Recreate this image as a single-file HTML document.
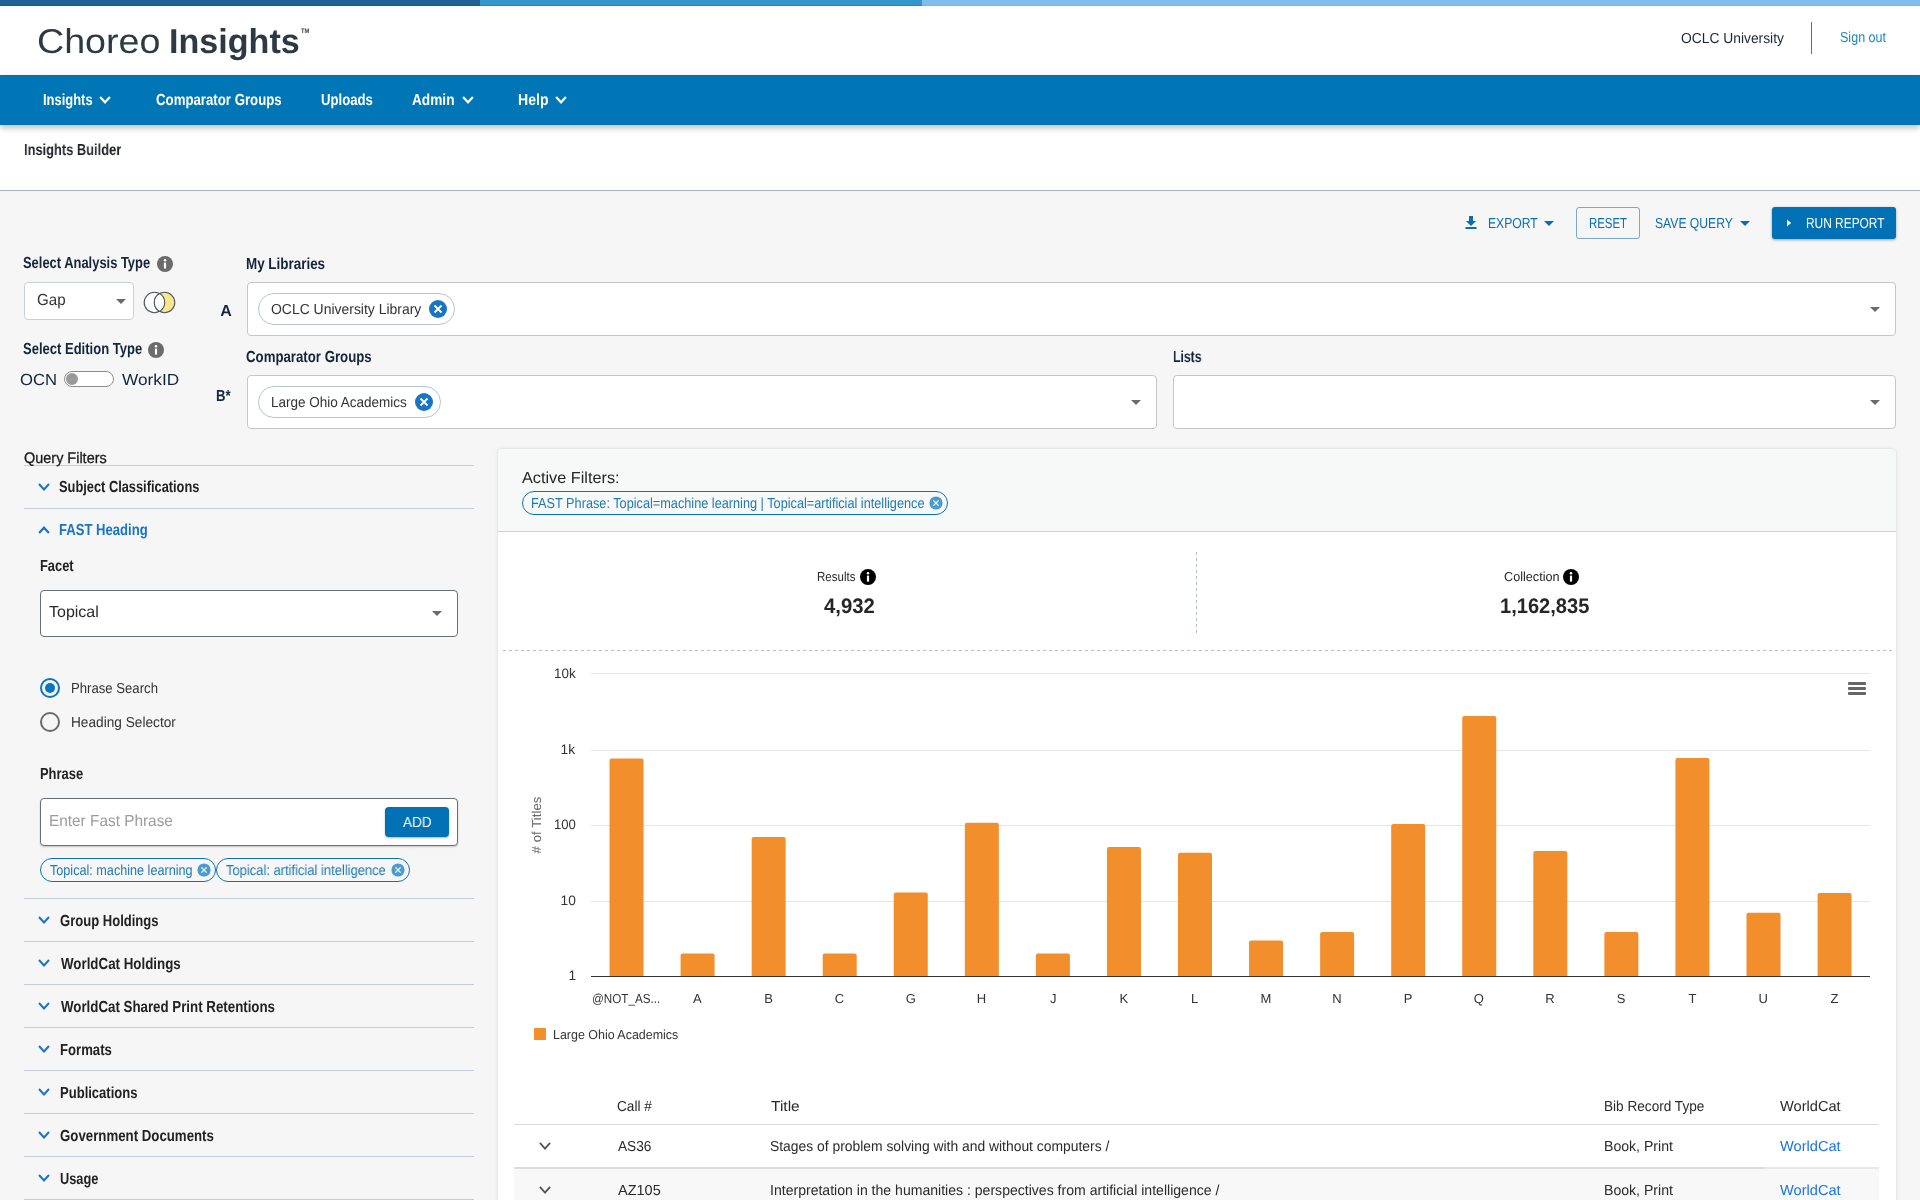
<!DOCTYPE html>
<html><head><meta charset="utf-8"><title>Choreo Insights</title>
<style>
html,body{margin:0;padding:0}
body{width:1920px;height:1200px;overflow:hidden;position:relative;background:#f6f6f6;font-family:"Liberation Sans",sans-serif;text-rendering:geometricPrecision;will-change:transform}
</style></head><body>
<div style="position:absolute;left:0;top:0;width:480px;height:6px;background:#236192;border-bottom:1px solid #1d5586;box-sizing:border-box"></div>
<div style="position:absolute;left:480px;top:0;width:442px;height:6px;background:#3397c9;border-bottom:1px solid #238bc2;box-sizing:border-box"></div>
<div style="position:absolute;left:922px;top:0;width:998px;height:6px;background:#80bdeb;border-bottom:1px solid #74b4e6;box-sizing:border-box"></div>
<div style="position:absolute;left:0;top:6px;width:1920px;height:69px;background:#fff"></div>
<div style="position:absolute;left:1811px;top:22px;width:1px;height:32px;background:#6b6b6b"></div>
<div style="position:absolute;left:0;top:125px;width:1920px;height:65px;background:#fff"></div>
<div style="position:absolute;left:0;top:190px;width:1920px;height:1px;background:#a9b3bf"></div>
<div style="position:absolute;left:0;top:75px;width:1920px;height:50px;background:#0076b6;box-shadow:0 3px 6px rgba(0,0,0,.25)"></div>
<svg style="position:absolute;left:99px;top:96px" width="12" height="8" viewBox="0 0 12 8"><polyline points="1.1,1.1 6.0,6.35 10.9,1.1" fill="none" stroke="#fff" stroke-width="2.2" stroke-linecap="butt" stroke-linejoin="miter"/></svg>
<svg style="position:absolute;left:462px;top:96px" width="12" height="8" viewBox="0 0 12 8"><polyline points="1.1,1.1 6.0,6.35 10.9,1.1" fill="none" stroke="#fff" stroke-width="2.2" stroke-linecap="butt" stroke-linejoin="miter"/></svg>
<svg style="position:absolute;left:555px;top:96px" width="12" height="8" viewBox="0 0 12 8"><polyline points="1.1,1.1 6.0,6.35 10.9,1.1" fill="none" stroke="#fff" stroke-width="2.2" stroke-linecap="butt" stroke-linejoin="miter"/></svg>
<svg style="position:absolute;left:1465px;top:216px" width="12" height="13" viewBox="0 0 12 13"><path d="M4 0h4v5h3l-5 5-5-5h3z" fill="#0a6fb2"/><rect x="0.5" y="11" width="11" height="2" fill="#0a6fb2"/></svg>
<svg style="position:absolute;left:1544px;top:221px" width="10" height="5" viewBox="0 0 10 5"><polygon points="0,0 10,0 5.0,5" fill="#0a6fb2"/></svg>
<div style="position:absolute;left:1576px;top:207px;width:64px;height:32px;border:1px solid #79a9d1;border-radius:3px;box-sizing:border-box"></div>
<svg style="position:absolute;left:1740px;top:221px" width="10" height="5" viewBox="0 0 10 5"><polygon points="0,0 10,0 5.0,5" fill="#0a6fb2"/></svg>
<div style="position:absolute;left:1772px;top:207px;width:124px;height:32px;background:#0071b4;border-radius:3px;box-shadow:0 1px 3px rgba(0,0,0,.35)"></div>
<svg style="position:absolute;left:1787px;top:219px" width="5" height="8" viewBox="0 0 5 8"><polygon points="0,0.5 4.2,4 0,7.5" fill="#fff"/></svg>
<svg style="position:absolute;left:157px;top:256px" width="16" height="16" viewBox="0 0 16 16"><circle cx="8" cy="8" r="8" fill="#6b6b6b"/><rect x="6.9" y="6.6" width="2.2" height="6" fill="#fff"/><circle cx="8" cy="4.3" r="1.25" fill="#fff"/></svg>
<div style="position:absolute;left:24px;top:282px;width:110px;height:38px;background:#fff;border:1px solid #c9d0d8;border-radius:4px;box-sizing:border-box"></div>
<svg style="position:absolute;left:116px;top:299px" width="10" height="5" viewBox="0 0 10 5"><polygon points="0,0 10,0 5.0,5" fill="#6b6b6b"/></svg>
<svg style="position:absolute;left:143px;top:291px" width="33" height="23" viewBox="0 0 33 23"><circle cx="11.4" cy="11.5" r="10.2" fill="#fff" stroke="#4a5566" stroke-width="1.1"/><circle cx="21.6" cy="11.5" r="10.2" fill="#fde68a" stroke="#4a5566" stroke-width="1.1"/><path d="M16.5 2.6 A10.2 10.2 0 0 1 16.5 20.4 A10.2 10.2 0 0 1 16.5 2.6Z" fill="#fff" stroke="#4a5566" stroke-width="1.1"/></svg>
<svg style="position:absolute;left:148px;top:342px" width="16" height="16" viewBox="0 0 16 16"><circle cx="8" cy="8" r="8" fill="#6b6b6b"/><rect x="6.9" y="6.6" width="2.2" height="6" fill="#fff"/><circle cx="8" cy="4.3" r="1.25" fill="#fff"/></svg>
<div style="position:absolute;left:64px;top:371px;width:50px;height:16px;background:#fff;border:1px solid #8c8c8c;border-radius:8px;box-sizing:border-box"></div>
<div style="position:absolute;left:66px;top:373px;width:12px;height:12px;background:#9a9a9a;border-radius:50%"></div>
<div style="position:absolute;left:247px;top:282px;width:1649px;height:54px;background:#fff;border:1px solid #c6c6c6;border-radius:4px;box-sizing:border-box"></div>
<div style="position:absolute;left:258px;top:293px;width:197px;height:32px;border:1px solid #b8c4d1;border-radius:16px;box-sizing:border-box"></div>
<svg style="position:absolute;left:429px;top:300px" width="18" height="18" viewBox="0 0 18 18"><circle cx="9" cy="9" r="9" fill="#1a74c4"/><path d="M5.5 5.5 L12.5 12.5 M12.5 5.5 L5.5 12.5" stroke="#fff" stroke-width="1.8"/></svg>
<svg style="position:absolute;left:1870px;top:307px" width="10" height="5" viewBox="0 0 10 5"><polygon points="0,0 10,0 5.0,5" fill="#6b6b6b"/></svg>
<div style="position:absolute;left:247px;top:375px;width:910px;height:54px;background:#fff;border:1px solid #c6c6c6;border-radius:4px;box-sizing:border-box"></div>
<div style="position:absolute;left:258px;top:386px;width:183px;height:32px;border:1px solid #b8c4d1;border-radius:16px;box-sizing:border-box"></div>
<svg style="position:absolute;left:415px;top:393px" width="18" height="18" viewBox="0 0 18 18"><circle cx="9" cy="9" r="9" fill="#1a74c4"/><path d="M5.5 5.5 L12.5 12.5 M12.5 5.5 L5.5 12.5" stroke="#fff" stroke-width="1.8"/></svg>
<svg style="position:absolute;left:1131px;top:400px" width="10" height="5" viewBox="0 0 10 5"><polygon points="0,0 10,0 5.0,5" fill="#6b6b6b"/></svg>
<div style="position:absolute;left:1173px;top:375px;width:723px;height:54px;background:#fff;border:1px solid #c6c6c6;border-radius:4px;box-sizing:border-box"></div>
<svg style="position:absolute;left:1870px;top:400px" width="10" height="5" viewBox="0 0 10 5"><polygon points="0,0 10,0 5.0,5" fill="#6b6b6b"/></svg>
<div style="position:absolute;left:24px;top:465px;width:450px;height:1px;background:#c5ccd5"></div>
<svg style="position:absolute;left:38px;top:483px" width="12" height="8" viewBox="0 0 12 8"><polyline points="1.0,1.0 6.0,6.5 11.0,1.0" fill="none" stroke="#1a74c4" stroke-width="2" stroke-linecap="butt" stroke-linejoin="miter"/></svg>
<div style="position:absolute;left:24px;top:508px;width:450px;height:1px;background:#c5ccd5"></div>
<svg style="position:absolute;left:38px;top:526px" width="12" height="8" viewBox="0 0 12 8"><polyline points="1.1,6.9 6.0,1.6500000000000001 10.9,6.9" fill="none" stroke="#1a74c4" stroke-width="2.2"/></svg>
<div style="position:absolute;left:40px;top:590px;width:418px;height:47px;background:#fff;border:1px solid #676f7a;border-radius:4px;box-sizing:border-box"></div>
<svg style="position:absolute;left:432px;top:611px" width="10" height="5" viewBox="0 0 10 5"><polygon points="0,0 10,0 5.0,5" fill="#6b6b6b"/></svg>
<svg style="position:absolute;left:40px;top:678px" width="20" height="20" viewBox="0 0 20 20"><circle cx="10" cy="10" r="9" fill="none" stroke="#0a76c0" stroke-width="2"/><circle cx="10" cy="10" r="5" fill="#0a76c0"/></svg>
<svg style="position:absolute;left:40px;top:712px" width="20" height="20" viewBox="0 0 20 20"><circle cx="10" cy="10" r="9" fill="none" stroke="#6b6b6b" stroke-width="2"/></svg>
<div style="position:absolute;left:40px;top:798px;width:418px;height:48px;background:#fff;border:1px solid #676f7a;border-radius:4px;box-sizing:border-box;box-shadow:0 1px 2px rgba(0,0,0,.2)"></div>
<div style="position:absolute;left:385px;top:807px;width:64px;height:30px;background:#0071b4;border-radius:4px;box-shadow:0 1px 2px rgba(0,0,0,.3)"></div>
<div style="position:absolute;left:40px;top:858px;width:176px;height:24px;border:1px solid #0b72b4;border-radius:12px;box-sizing:border-box"></div>
<svg style="position:absolute;left:197px;top:863px" width="14" height="14" viewBox="0 0 14 14"><circle cx="7" cy="7" r="6.6" fill="#4a9bd0"/><path d="M4.4 4.4 L9.6 9.6 M9.6 4.4 L4.4 9.6" stroke="#fff" stroke-width="1.3"/></svg>
<div style="position:absolute;left:216px;top:858px;width:194px;height:24px;border:1px solid #0b72b4;border-radius:12px;box-sizing:border-box"></div>
<svg style="position:absolute;left:391px;top:863px" width="14" height="14" viewBox="0 0 14 14"><circle cx="7" cy="7" r="6.6" fill="#4a9bd0"/><path d="M4.4 4.4 L9.6 9.6 M9.6 4.4 L4.4 9.6" stroke="#fff" stroke-width="1.3"/></svg>
<div style="position:absolute;left:24px;top:898px;width:450px;height:1px;background:#c5ccd5"></div>
<svg style="position:absolute;left:38px;top:916px" width="12" height="8" viewBox="0 0 12 8"><polyline points="1.0,1.0 6.0,6.5 11.0,1.0" fill="none" stroke="#1a74c4" stroke-width="2" stroke-linecap="butt" stroke-linejoin="miter"/></svg>
<div style="position:absolute;left:24px;top:941px;width:450px;height:1px;background:#c5ccd5"></div>
<svg style="position:absolute;left:38px;top:959px" width="12" height="8" viewBox="0 0 12 8"><polyline points="1.0,1.0 6.0,6.5 11.0,1.0" fill="none" stroke="#1a74c4" stroke-width="2" stroke-linecap="butt" stroke-linejoin="miter"/></svg>
<div style="position:absolute;left:24px;top:984px;width:450px;height:1px;background:#c5ccd5"></div>
<svg style="position:absolute;left:38px;top:1002px" width="12" height="8" viewBox="0 0 12 8"><polyline points="1.0,1.0 6.0,6.5 11.0,1.0" fill="none" stroke="#1a74c4" stroke-width="2" stroke-linecap="butt" stroke-linejoin="miter"/></svg>
<div style="position:absolute;left:24px;top:1027px;width:450px;height:1px;background:#c5ccd5"></div>
<svg style="position:absolute;left:38px;top:1045px" width="12" height="8" viewBox="0 0 12 8"><polyline points="1.0,1.0 6.0,6.5 11.0,1.0" fill="none" stroke="#1a74c4" stroke-width="2" stroke-linecap="butt" stroke-linejoin="miter"/></svg>
<div style="position:absolute;left:24px;top:1070px;width:450px;height:1px;background:#c5ccd5"></div>
<svg style="position:absolute;left:38px;top:1088px" width="12" height="8" viewBox="0 0 12 8"><polyline points="1.0,1.0 6.0,6.5 11.0,1.0" fill="none" stroke="#1a74c4" stroke-width="2" stroke-linecap="butt" stroke-linejoin="miter"/></svg>
<div style="position:absolute;left:24px;top:1113px;width:450px;height:1px;background:#c5ccd5"></div>
<svg style="position:absolute;left:38px;top:1131px" width="12" height="8" viewBox="0 0 12 8"><polyline points="1.0,1.0 6.0,6.5 11.0,1.0" fill="none" stroke="#1a74c4" stroke-width="2" stroke-linecap="butt" stroke-linejoin="miter"/></svg>
<div style="position:absolute;left:24px;top:1156px;width:450px;height:1px;background:#c5ccd5"></div>
<svg style="position:absolute;left:38px;top:1174px" width="12" height="8" viewBox="0 0 12 8"><polyline points="1.0,1.0 6.0,6.5 11.0,1.0" fill="none" stroke="#1a74c4" stroke-width="2" stroke-linecap="butt" stroke-linejoin="miter"/></svg>
<div style="position:absolute;left:24px;top:1199px;width:450px;height:1px;background:#c5ccd5"></div>
<div style="position:absolute;left:498px;top:449px;width:1398px;height:800px;background:#fff;border-radius:4px;box-shadow:0 0 1px rgba(0,0,0,.22),0 0 4px rgba(0,0,0,.1)"></div>
<div style="position:absolute;left:498px;top:449px;width:1398px;height:83px;background:#f7f8f8;border-radius:4px 4px 0 0;border-bottom:1px solid #cfd1d2;box-sizing:border-box"></div>
<div style="position:absolute;left:522px;top:491px;width:426px;height:24px;border:1px solid #0b72b4;border-radius:12px;box-sizing:border-box"></div>
<svg style="position:absolute;left:929px;top:496px" width="14" height="14" viewBox="0 0 14 14"><circle cx="7" cy="7" r="6.6" fill="#4a9bd0"/><path d="M4.4 4.4 L9.6 9.6 M9.6 4.4 L4.4 9.6" stroke="#fff" stroke-width="1.3"/></svg>
<svg style="position:absolute;left:860px;top:569px" width="16" height="16" viewBox="0 0 16 16"><circle cx="8" cy="8" r="8" fill="#000"/><rect x="6.9" y="6.6" width="2.2" height="6" fill="#fff"/><circle cx="8" cy="4.2" r="1.25" fill="#fff"/></svg>
<div style="position:absolute;left:1196px;top:552px;width:1px;height:82px;background:repeating-linear-gradient(to bottom,#b3bcc6 0 3px,transparent 3px 6px)"></div>
<svg style="position:absolute;left:1563px;top:569px" width="16" height="16" viewBox="0 0 16 16"><circle cx="8" cy="8" r="8" fill="#000"/><rect x="6.9" y="6.6" width="2.2" height="6" fill="#fff"/><circle cx="8" cy="4.2" r="1.25" fill="#fff"/></svg>
<div style="position:absolute;left:503px;top:650px;width:1389px;height:1px;background:repeating-linear-gradient(to right,#b3bcc6 0 3px,transparent 3px 6px)"></div>
<div style="position:absolute;left:591px;top:673px;width:1279px;height:1px;background:#e6e6e6"></div>
<div style="position:absolute;left:591px;top:750px;width:1279px;height:1px;background:#e6e6e6"></div>
<div style="position:absolute;left:591px;top:825px;width:1279px;height:1px;background:#e6e6e6"></div>
<div style="position:absolute;left:591px;top:901px;width:1279px;height:1px;background:#e6e6e6"></div>
<div style="position:absolute;left:591px;top:976px;width:1279px;height:1px;background:#333"></div>
<svg style="position:absolute;left:591px;top:650px" width="1279" height="326" viewBox="0 0 1279 326"><path d="M18.53 326 V110.60 Q18.53 108.60 20.53 108.60 H50.53 Q52.53 108.60 52.53 110.60 V326Z" fill="#f28e2b"/><path d="M89.59 326 V305.50 Q89.59 303.50 91.59 303.50 H121.59 Q123.59 303.50 123.59 305.50 V326Z" fill="#f28e2b"/><path d="M160.65 326 V189.00 Q160.65 187.00 162.65 187.00 H192.65 Q194.65 187.00 194.65 189.00 V326Z" fill="#f28e2b"/><path d="M231.71 326 V305.50 Q231.71 303.50 233.71 303.50 H263.71 Q265.71 303.50 265.71 305.50 V326Z" fill="#f28e2b"/><path d="M302.77 326 V244.40 Q302.77 242.40 304.77 242.40 H334.77 Q336.77 242.40 336.77 244.40 V326Z" fill="#f28e2b"/><path d="M373.83 326 V174.80 Q373.83 172.80 375.83 172.80 H405.83 Q407.83 172.80 407.83 174.80 V326Z" fill="#f28e2b"/><path d="M444.89 326 V305.50 Q444.89 303.50 446.89 303.50 H476.89 Q478.89 303.50 478.89 305.50 V326Z" fill="#f28e2b"/><path d="M515.95 326 V198.90 Q515.95 196.90 517.95 196.90 H547.95 Q549.95 196.90 549.95 198.90 V326Z" fill="#f28e2b"/><path d="M587.01 326 V204.70 Q587.01 202.70 589.01 202.70 H619.01 Q621.01 202.70 621.01 204.70 V326Z" fill="#f28e2b"/><path d="M658.07 326 V292.60 Q658.07 290.60 660.07 290.60 H690.07 Q692.07 290.60 692.07 292.60 V326Z" fill="#f28e2b"/><path d="M729.13 326 V284.00 Q729.13 282.00 731.13 282.00 H761.13 Q763.13 282.00 763.13 284.00 V326Z" fill="#f28e2b"/><path d="M800.19 326 V176.00 Q800.19 174.00 802.19 174.00 H832.19 Q834.19 174.00 834.19 176.00 V326Z" fill="#f28e2b"/><path d="M871.25 326 V68.00 Q871.25 66.00 873.25 66.00 H903.25 Q905.25 66.00 905.25 68.00 V326Z" fill="#f28e2b"/><path d="M942.31 326 V203.00 Q942.31 201.00 944.31 201.00 H974.31 Q976.31 201.00 976.31 203.00 V326Z" fill="#f28e2b"/><path d="M1013.37 326 V284.00 Q1013.37 282.00 1015.37 282.00 H1045.37 Q1047.37 282.00 1047.37 284.00 V326Z" fill="#f28e2b"/><path d="M1084.43 326 V110.00 Q1084.43 108.00 1086.43 108.00 H1116.43 Q1118.43 108.00 1118.43 110.00 V326Z" fill="#f28e2b"/><path d="M1155.49 326 V264.80 Q1155.49 262.80 1157.49 262.80 H1187.49 Q1189.49 262.80 1189.49 264.80 V326Z" fill="#f28e2b"/><path d="M1226.55 326 V245.00 Q1226.55 243.00 1228.55 243.00 H1258.55 Q1260.55 243.00 1260.55 245.00 V326Z" fill="#f28e2b"/></svg>
<div style="position:absolute;left:1848px;top:682px;width:18px;height:3px;background:#666;border-radius:1px"></div>
<div style="position:absolute;left:1848px;top:687px;width:18px;height:3px;background:#666;border-radius:1px"></div>
<div style="position:absolute;left:1848px;top:692px;width:18px;height:3px;background:#666;border-radius:1px"></div>
<div style="position:absolute;left:534px;top:1028px;width:12px;height:12px;background:#f28e2b"></div>
<div style="position:absolute;left:514px;top:1124px;width:1365px;height:1px;background:#dcdcdc"></div>
<svg style="position:absolute;left:539px;top:1142px" width="12" height="8" viewBox="0 0 12 8"><polyline points="0.9,0.9 6.0,6.65 11.1,0.9" fill="none" stroke="#555" stroke-width="1.8" stroke-linecap="butt" stroke-linejoin="miter"/></svg>
<div style="position:absolute;left:514px;top:1167px;width:1250px;height:2px;background:#dcdcdc"></div>
<div style="position:absolute;left:1764px;top:1167px;width:115px;height:2px;background:#e8e8e8"></div>
<div style="position:absolute;left:514px;top:1169px;width:1365px;height:40px;background:#f8f8f8"></div>
<svg style="position:absolute;left:539px;top:1186px" width="12" height="8" viewBox="0 0 12 8"><polyline points="0.9,0.9 6.0,6.65 11.1,0.9" fill="none" stroke="#555" stroke-width="1.8" stroke-linecap="butt" stroke-linejoin="miter"/></svg>
<div style="position:absolute;left:36.82px;top:20px;font-size:34.5px;line-height:44px;font-weight:300;color:#2d3a44;white-space:pre;transform:scaleX(1.0909);transform-origin:0 0;font-weight:normal;">Choreo</div>
<div style="position:absolute;left:168.52px;top:20px;font-size:34.5px;line-height:44px;font-weight:700;color:#2d3a44;white-space:pre;transform:scaleX(0.9884);transform-origin:0 0;">Insights</div>
<div style="position:absolute;left:301.00px;top:27px;font-size:6.5px;line-height:9px;font-weight:700;color:#2d3a44;white-space:pre;transform:scaleX(0.8889);transform-origin:0 0;">TM</div>
<div style="position:absolute;left:1681.05px;top:30px;font-size:14.5px;line-height:19px;font-weight:400;color:#1c2636;white-space:pre;transform:scaleX(0.9533);transform-origin:0 0;">OCLC University</div>
<div style="position:absolute;left:1840.13px;top:29px;font-size:14.5px;line-height:19px;font-weight:400;color:#1d87c4;white-space:pre;transform:scaleX(0.8654);transform-origin:0 0;">Sign out</div>
<div style="position:absolute;left:43.19px;top:91px;font-size:16.0px;line-height:20px;font-weight:700;color:#fff;white-space:pre;transform:scaleX(0.8083);transform-origin:0 0;">Insights</div>
<div style="position:absolute;left:156.17px;top:91px;font-size:16.0px;line-height:20px;font-weight:700;color:#fff;white-space:pre;transform:scaleX(0.8267);transform-origin:0 0;">Comparator Groups</div>
<div style="position:absolute;left:321.18px;top:91px;font-size:16.0px;line-height:20px;font-weight:700;color:#fff;white-space:pre;transform:scaleX(0.8226);transform-origin:0 0;">Uploads</div>
<div style="position:absolute;left:412.15px;top:91px;font-size:16.0px;line-height:20px;font-weight:700;color:#fff;white-space:pre;transform:scaleX(0.8542);transform-origin:0 0;">Admin</div>
<div style="position:absolute;left:518.12px;top:91px;font-size:16.0px;line-height:20px;font-weight:700;color:#fff;white-space:pre;transform:scaleX(0.8788);transform-origin:0 0;">Help</div>
<div style="position:absolute;left:23.70px;top:141px;font-size:16.0px;line-height:20px;font-weight:700;color:#1f2328;white-space:pre;transform:scaleX(0.8042);transform-origin:0 0;">Insights Builder</div>
<div style="position:absolute;left:1487.56px;top:215px;font-size:14.5px;line-height:19px;font-weight:400;color:#0a6fb2;white-space:pre;transform:scaleX(0.8379);transform-origin:0 0;">EXPORT</div>
<div style="position:absolute;left:1589.21px;top:215px;font-size:14.5px;line-height:19px;font-weight:400;color:#0a6fb2;white-space:pre;transform:scaleX(0.7872);transform-origin:0 0;">RESET</div>
<div style="position:absolute;left:1655.16px;top:215px;font-size:14.5px;line-height:19px;font-weight:400;color:#0a6fb2;white-space:pre;transform:scaleX(0.8370);transform-origin:0 0;">SAVE QUERY</div>
<div style="position:absolute;left:1806.18px;top:215px;font-size:14.5px;line-height:19px;font-weight:400;color:#fff;white-space:pre;transform:scaleX(0.8211);transform-origin:0 0;">RUN REPORT</div>
<div style="position:absolute;left:23.19px;top:254px;font-size:16.0px;line-height:20px;font-weight:700;color:#14253b;white-space:pre;transform:scaleX(0.8077);transform-origin:0 0;">Select Analysis Type</div>
<div style="position:absolute;left:36.66px;top:291px;font-size:16.0px;line-height:20px;font-weight:400;color:#333;white-space:pre;transform:scaleX(0.9448);transform-origin:0 0;">Gap</div>
<div style="position:absolute;left:23.19px;top:340px;font-size:16.0px;line-height:20px;font-weight:700;color:#14253b;white-space:pre;transform:scaleX(0.8138);transform-origin:0 0;">Select Edition Type</div>
<div style="position:absolute;left:19.56px;top:371px;font-size:16.0px;line-height:20px;font-weight:400;color:#14253b;white-space:pre;transform:scaleX(1.0424);transform-origin:0 0;">OCN</div>
<div style="position:absolute;left:122.00px;top:371px;font-size:16.0px;line-height:20px;font-weight:400;color:#14253b;white-space:pre;transform:scaleX(1.0769);transform-origin:0 0;">WorkID</div>
<div style="position:absolute;left:220.20px;top:302px;font-size:16.0px;line-height:20px;font-weight:700;color:#14253b;white-space:pre;">A</div>
<div style="position:absolute;left:216.18px;top:387px;font-size:16.0px;line-height:20px;font-weight:700;color:#14253b;white-space:pre;transform:scaleX(0.8235);transform-origin:0 0;">B*</div>
<div style="position:absolute;left:246.16px;top:255px;font-size:16.0px;line-height:20px;font-weight:700;color:#14253b;white-space:pre;transform:scaleX(0.8387);transform-origin:0 0;">My Libraries</div>
<div style="position:absolute;left:270.54px;top:301px;font-size:14.5px;line-height:19px;font-weight:400;color:#333;white-space:pre;transform:scaleX(0.9613);transform-origin:0 0;">OCLC University Library</div>
<div style="position:absolute;left:246.17px;top:348px;font-size:16.0px;line-height:20px;font-weight:700;color:#14253b;white-space:pre;transform:scaleX(0.8267);transform-origin:0 0;">Comparator Groups</div>
<div style="position:absolute;left:270.57px;top:394px;font-size:14.5px;line-height:19px;font-weight:400;color:#333;white-space:pre;transform:scaleX(0.9310);transform-origin:0 0;">Large Ohio Academics</div>
<div style="position:absolute;left:1173.24px;top:348px;font-size:16.0px;line-height:20px;font-weight:700;color:#14253b;white-space:pre;transform:scaleX(0.7639);transform-origin:0 0;">Lists</div>
<div style="position:absolute;left:23.55px;top:449px;font-size:15.25px;line-height:20px;font-weight:400;color:#1a1a1a;white-space:pre;transform:scaleX(0.9477);transform-origin:0 0;-webkit-text-stroke:0.3px #1a1a1a;">Query Filters</div>
<div style="position:absolute;left:59.20px;top:478px;font-size:16.0px;line-height:20px;font-weight:700;color:#222;white-space:pre;transform:scaleX(0.8017);transform-origin:0 0;">Subject Classifications</div>
<div style="position:absolute;left:59.18px;top:521px;font-size:16.0px;line-height:20px;font-weight:700;color:#1a74c4;white-space:pre;transform:scaleX(0.8178);transform-origin:0 0;">FAST Heading</div>
<div style="position:absolute;left:40.20px;top:557px;font-size:16.0px;line-height:20px;font-weight:700;color:#222;white-space:pre;transform:scaleX(0.8049);transform-origin:0 0;">Facet</div>
<div style="position:absolute;left:49.00px;top:603px;font-size:16.0px;line-height:20px;font-weight:400;color:#2a2a2a;white-space:pre;">Topical</div>
<div style="position:absolute;left:70.89px;top:680px;font-size:14.5px;line-height:19px;font-weight:400;color:#333;white-space:pre;transform:scaleX(0.9064);transform-origin:0 0;">Phrase Search</div>
<div style="position:absolute;left:70.86px;top:714px;font-size:14.5px;line-height:19px;font-weight:400;color:#333;white-space:pre;transform:scaleX(0.9427);transform-origin:0 0;">Heading Selector</div>
<div style="position:absolute;left:40.19px;top:765px;font-size:16.0px;line-height:20px;font-weight:700;color:#222;white-space:pre;transform:scaleX(0.8077);transform-origin:0 0;">Phrase</div>
<div style="position:absolute;left:49.04px;top:812px;font-size:16.0px;line-height:20px;font-weight:400;color:#9c9c9c;white-space:pre;transform:scaleX(0.9606);transform-origin:0 0;">Enter Fast Phrase</div>
<div style="position:absolute;left:403.00px;top:814px;font-size:14.5px;line-height:19px;font-weight:400;color:#fff;white-space:pre;transform:scaleX(0.9333);transform-origin:0 0;">ADD</div>
<div style="position:absolute;left:49.50px;top:862px;font-size:14.5px;line-height:19px;font-weight:400;color:#1f7ab3;white-space:pre;transform:scaleX(0.8712);transform-origin:0 0;">Topical: machine learning</div>
<div style="position:absolute;left:226.00px;top:862px;font-size:14.5px;line-height:19px;font-weight:400;color:#1f7ab3;white-space:pre;transform:scaleX(0.8933);transform-origin:0 0;">Topical: artificial intelligence</div>
<div style="position:absolute;left:59.78px;top:912px;font-size:16.0px;line-height:20px;font-weight:700;color:#222;white-space:pre;transform:scaleX(0.8151);transform-origin:0 0;">Group Holdings</div>
<div style="position:absolute;left:60.60px;top:955px;font-size:16.0px;line-height:20px;font-weight:700;color:#222;white-space:pre;transform:scaleX(0.8329);transform-origin:0 0;">WorldCat Holdings</div>
<div style="position:absolute;left:60.60px;top:998px;font-size:16.0px;line-height:20px;font-weight:700;color:#222;white-space:pre;transform:scaleX(0.8311);transform-origin:0 0;">WorldCat Shared Print Retentions</div>
<div style="position:absolute;left:59.78px;top:1041px;font-size:16.0px;line-height:20px;font-weight:700;color:#222;white-space:pre;transform:scaleX(0.8210);transform-origin:0 0;">Formats</div>
<div style="position:absolute;left:59.79px;top:1084px;font-size:16.0px;line-height:20px;font-weight:700;color:#222;white-space:pre;transform:scaleX(0.8149);transform-origin:0 0;">Publications</div>
<div style="position:absolute;left:59.77px;top:1127px;font-size:16.0px;line-height:20px;font-weight:700;color:#222;white-space:pre;transform:scaleX(0.8283);transform-origin:0 0;">Government Documents</div>
<div style="position:absolute;left:59.80px;top:1170px;font-size:16.0px;line-height:20px;font-weight:700;color:#222;white-space:pre;transform:scaleX(0.8000);transform-origin:0 0;">Usage</div>
<div style="position:absolute;left:522.00px;top:469px;font-size:16.0px;line-height:20px;font-weight:400;color:#262626;white-space:pre;transform:scaleX(1.0158);transform-origin:0 0;">Active Filters:</div>
<div style="position:absolute;left:531.12px;top:495px;font-size:14.5px;line-height:19px;font-weight:400;color:#1f7ab3;white-space:pre;transform:scaleX(0.8770);transform-origin:0 0;">FAST Phrase: Topical=machine learning | Topical=artificial intelligence</div>
<div style="position:absolute;left:816.91px;top:568px;font-size:13.0px;line-height:17px;font-weight:400;color:#262626;white-space:pre;transform:scaleX(0.8857);transform-origin:0 0;">Results</div>
<div style="position:absolute;left:823.80px;top:593px;font-size:21.0px;line-height:27px;font-weight:700;color:#262626;white-space:pre;transform:scaleX(0.9654);transform-origin:0 0;">4,932</div>
<div style="position:absolute;left:1503.53px;top:568px;font-size:13.0px;line-height:17px;font-weight:400;color:#262626;white-space:pre;transform:scaleX(0.9727);transform-origin:0 0;">Collection</div>
<div style="position:absolute;left:1500.04px;top:593px;font-size:21.0px;line-height:27px;font-weight:700;color:#262626;white-space:pre;transform:scaleX(0.9565);transform-origin:0 0;">1,162,835</div>
<div style="position:absolute;left:554.12px;top:665px;font-size:13.75px;line-height:18px;font-weight:400;color:#333;white-space:pre;transform:scaleX(0.9762);transform-origin:0 0;">10k</div>
<div style="position:absolute;left:560.60px;top:741px;font-size:13.75px;line-height:18px;font-weight:400;color:#333;white-space:pre;">1k</div>
<div style="position:absolute;left:553.65px;top:816px;font-size:13.75px;line-height:18px;font-weight:400;color:#333;white-space:pre;transform:scaleX(0.9545);transform-origin:0 0;">100</div>
<div style="position:absolute;left:560.60px;top:892px;font-size:13.75px;line-height:18px;font-weight:400;color:#333;white-space:pre;">10</div>
<div style="position:absolute;left:568.50px;top:967px;font-size:13.75px;line-height:18px;font-weight:400;color:#333;white-space:pre;">1</div>
<div style="position:absolute;left:552.54px;top:1026px;font-size:13.0px;line-height:17px;font-weight:400;color:#333;white-space:pre;transform:scaleX(0.9574);transform-origin:0 0;">Large Ohio Academics</div>
<div style="position:absolute;left:617.26px;top:1098px;font-size:14.5px;line-height:19px;font-weight:400;color:#2a2a2a;white-space:pre;transform:scaleX(0.9389);transform-origin:0 0;">Call #</div>
<div style="position:absolute;left:771.20px;top:1098px;font-size:14.5px;line-height:19px;font-weight:400;color:#2a2a2a;white-space:pre;transform:scaleX(1.0692);transform-origin:0 0;">Title</div>
<div style="position:absolute;left:1604.06px;top:1098px;font-size:14.5px;line-height:19px;font-weight:400;color:#2a2a2a;white-space:pre;transform:scaleX(0.9381);transform-origin:0 0;">Bib Record Type</div>
<div style="position:absolute;left:1779.50px;top:1098px;font-size:14.5px;line-height:19px;font-weight:400;color:#2a2a2a;white-space:pre;transform:scaleX(1.0083);transform-origin:0 0;">WorldCat</div>
<div style="position:absolute;left:618.00px;top:1138px;font-size:14.5px;line-height:19px;font-weight:400;color:#2a2a2a;white-space:pre;transform:scaleX(0.9429);transform-origin:0 0;">AS36</div>
<div style="position:absolute;left:770.04px;top:1138px;font-size:14.5px;line-height:19px;font-weight:400;color:#2a2a2a;white-space:pre;transform:scaleX(0.9567);transform-origin:0 0;">Stages of problem solving with and without computers /</div>
<div style="position:absolute;left:1604.03px;top:1138px;font-size:14.5px;line-height:19px;font-weight:400;color:#2a2a2a;white-space:pre;transform:scaleX(0.9714);transform-origin:0 0;">Book, Print</div>
<div style="position:absolute;left:1779.50px;top:1138px;font-size:14.5px;line-height:19px;font-weight:400;color:#1a73e8;white-space:pre;transform:scaleX(1.0083);transform-origin:0 0;">WorldCat</div>
<div style="position:absolute;left:618.00px;top:1182px;font-size:14.5px;line-height:19px;font-weight:400;color:#2a2a2a;white-space:pre;">AZ105</div>
<div style="position:absolute;left:770.03px;top:1182px;font-size:14.5px;line-height:19px;font-weight:400;color:#2a2a2a;white-space:pre;transform:scaleX(0.9697);transform-origin:0 0;">Interpretation in the humanities : perspectives from artificial intelligence /</div>
<div style="position:absolute;left:1604.03px;top:1182px;font-size:14.5px;line-height:19px;font-weight:400;color:#2a2a2a;white-space:pre;transform:scaleX(0.9714);transform-origin:0 0;">Book, Print</div>
<div style="position:absolute;left:1779.50px;top:1182px;font-size:14.5px;line-height:19px;font-weight:400;color:#1a73e8;white-space:pre;transform:scaleX(1.0083);transform-origin:0 0;">WorldCat</div>
<div style="position:absolute;left:592.20px;top:990px;font-size:13.0px;line-height:17px;font-weight:400;color:#333;white-space:pre;transform:scaleX(0.8973);transform-origin:0 0;">@NOT_AS...</div>
<div style="position:absolute;left:693.09px;top:990px;font-size:13.0px;line-height:17px;font-weight:400;color:#333;white-space:pre;">A</div>
<div style="position:absolute;left:764.15px;top:990px;font-size:13.0px;line-height:17px;font-weight:400;color:#333;white-space:pre;">B</div>
<div style="position:absolute;left:834.71px;top:990px;font-size:13.0px;line-height:17px;font-weight:400;color:#333;white-space:pre;">C</div>
<div style="position:absolute;left:905.77px;top:990px;font-size:13.0px;line-height:17px;font-weight:400;color:#333;white-space:pre;">G</div>
<div style="position:absolute;left:976.83px;top:990px;font-size:13.0px;line-height:17px;font-weight:400;color:#333;white-space:pre;">H</div>
<div style="position:absolute;left:1049.89px;top:990px;font-size:13.0px;line-height:17px;font-weight:400;color:#333;white-space:pre;">J</div>
<div style="position:absolute;left:1119.45px;top:990px;font-size:13.0px;line-height:17px;font-weight:400;color:#333;white-space:pre;">K</div>
<div style="position:absolute;left:1191.01px;top:990px;font-size:13.0px;line-height:17px;font-weight:400;color:#333;white-space:pre;">L</div>
<div style="position:absolute;left:1260.57px;top:990px;font-size:13.0px;line-height:17px;font-weight:400;color:#333;white-space:pre;">M</div>
<div style="position:absolute;left:1332.13px;top:990px;font-size:13.0px;line-height:17px;font-weight:400;color:#333;white-space:pre;">N</div>
<div style="position:absolute;left:1403.69px;top:990px;font-size:13.0px;line-height:17px;font-weight:400;color:#333;white-space:pre;">P</div>
<div style="position:absolute;left:1473.75px;top:990px;font-size:13.0px;line-height:17px;font-weight:400;color:#333;white-space:pre;">Q</div>
<div style="position:absolute;left:1545.31px;top:990px;font-size:13.0px;line-height:17px;font-weight:400;color:#333;white-space:pre;">R</div>
<div style="position:absolute;left:1616.87px;top:990px;font-size:13.0px;line-height:17px;font-weight:400;color:#333;white-space:pre;">S</div>
<div style="position:absolute;left:1688.43px;top:990px;font-size:13.0px;line-height:17px;font-weight:400;color:#333;white-space:pre;">T</div>
<div style="position:absolute;left:1758.49px;top:990px;font-size:13.0px;line-height:17px;font-weight:400;color:#333;white-space:pre;">U</div>
<div style="position:absolute;left:1830.55px;top:990px;font-size:13.0px;line-height:17px;font-weight:400;color:#333;white-space:pre;">Z</div>
<div style="position:absolute;left:535.6px;top:825px;width:0;height:0"><div style="position:absolute;transform:translate(-50%,-50%) rotate(-90deg);font-size:13px;line-height:13px;color:#666;white-space:pre;letter-spacing:0.1px"># of Titles</div></div>
</body></html>
